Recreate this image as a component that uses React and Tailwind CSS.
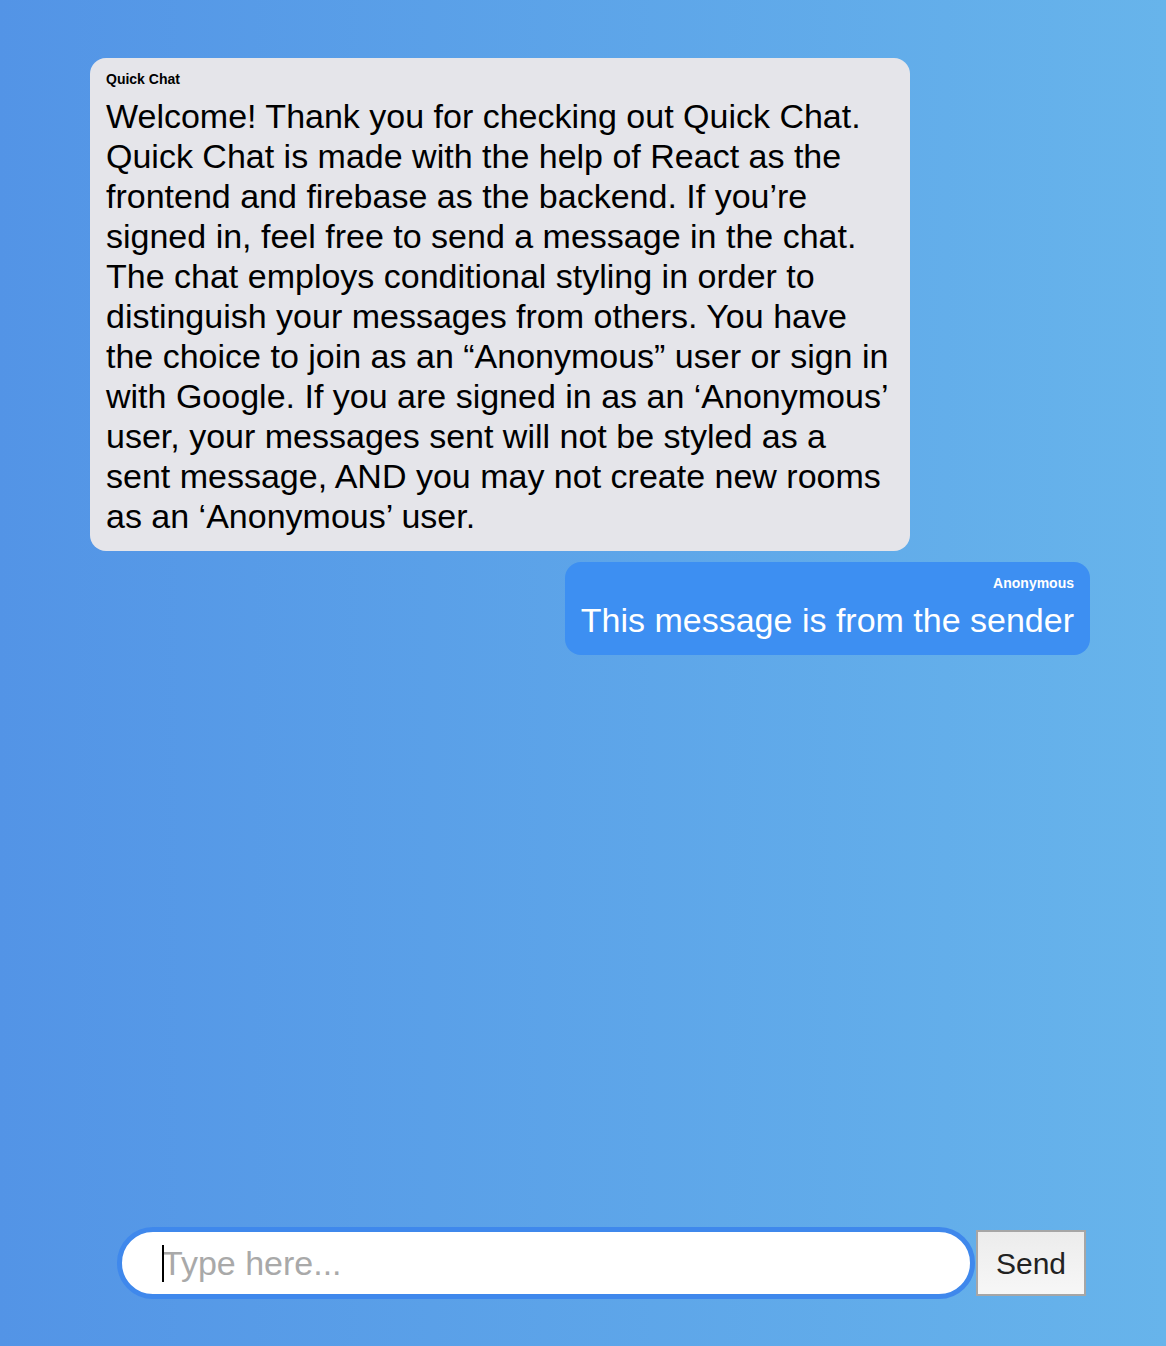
import { useState } from "react";

export default function App() {
  const [text, setText] = useState("");

  const welcome =
    "Welcome! Thank you for checking out Quick Chat. Quick Chat is made with the help of React as the frontend and firebase as the backend. If you\u2019re signed in, feel free to send a message in the chat. The chat employs conditional styling in order to distinguish your messages from others. You have the choice to join as an \u201cAnonymous\u201d user or sign in with Google. If you are signed in as an \u2018Anonymous\u2019 user, your messages sent will not be styled as a sent message, AND you may not create new rooms as an \u2018Anonymous\u2019 user.";

  return (
    <div className="flex h-[1346px] w-full flex-col bg-gradient-to-r from-[#5394e6] to-[#67b4eb] font-['Liberation_Sans',Arial,sans-serif]">
      <main className="flex flex-1 flex-col gap-[11px] pl-[90px] pr-[76px] pt-[58px]">
        <div className="w-[820px] self-start rounded-2xl bg-[#e5e5ea] px-4 pb-[15px] pt-[13px] text-black">
          <p className="text-sm font-bold leading-4">Quick Chat</p>
          <p className="mt-[9px] text-[34px] leading-10">{welcome}</p>
        </div>
        <div className="self-end rounded-2xl bg-[#3d8ff2] px-4 pb-[15px] pt-[13px] text-right text-white">
          <p className="text-sm font-bold leading-4">Anonymous</p>
          <p className="mt-[9px] text-[34px] leading-10">This message is from the sender</p>
        </div>
      </main>
      <form
        className="flex items-center pb-[47px] pl-[117px]"
        onSubmit={(e) => {
          e.preventDefault();
          setText("");
        }}
      >
        <div className="relative">
          <input
            type="text"
            value={text}
            onChange={(e) => setText(e.target.value)}
            placeholder="Type here..."
            className="h-[72px] w-[858px] rounded-full border-[5px] border-[#3f88ec] bg-white pl-[40px] text-[34px] text-black outline-none placeholder:text-[#a9a9a9]"
          />
          {text === "" && (
            <span className="pointer-events-none absolute left-[45px] top-[18px] h-[37px] w-[2px] bg-black" />
          )}
        </div>
        <button
          type="submit"
          className="ml-px h-[66px] w-[110px] border-2 border-[#a6a6a6] bg-gradient-to-b from-[#ececec] to-[#f7f7f7] text-[30px] text-[#222]"
        >
          Send
        </button>
      </form>
    </div>
  );
}
